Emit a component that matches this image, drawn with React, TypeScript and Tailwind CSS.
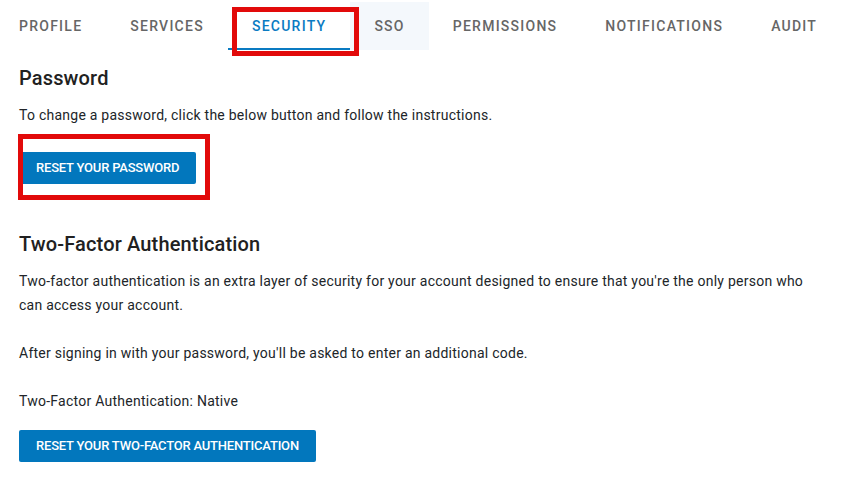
const tabs = ["PROFILE", "SERVICES", "SECURITY", "SSO", "PERMISSIONS", "NOTIFICATIONS", "AUDIT"];

export default function App() {
  return (
    <div className="relative min-h-[479px] w-[857px] overflow-hidden bg-white pl-[19px] font-['Roboto',sans-serif] text-[#212529]">
      <div className="-ml-6 mt-[2px] flex h-12">
        {tabs.map((t) => (
          <div
            key={t}
            className={
              t === "SECURITY"
                ? "flex h-12 items-center border-b-2 border-[#0a7bc2] px-6 pt-[2px] text-[14px] font-medium tracking-[1.25px] text-[#0a7bc2]"
                : t === "SSO"
                ? "flex h-12 items-center bg-[#f4f8fc] px-6 text-[14px] font-medium tracking-[1.25px] text-[#666666]"
                : "flex h-12 items-center px-6 text-[14px] font-medium tracking-[1.25px] text-[#666666]"
            }
          >
            {t}
          </div>
        ))}
      </div>

      <section className="w-[800px] tracking-[0.25px]">
        <h2 className="mt-[12px] text-[20px] font-medium leading-8 tracking-[0.15px] text-[#212121]">Password</h2>
        <p className="mt-[9px] text-[14px] leading-6">
          To change a password, click the below button and follow the instructions.
        </p>
        <button className="mt-[25px] h-8 rounded-[2px] bg-[#0277bd] px-[17px] text-[13px] font-medium tracking-[-0.2px] text-white">
          RESET YOUR PASSWORD
        </button>

        <h2 className="mt-[44px] text-[20px] font-medium leading-8 tracking-[0.15px] text-[#212121]">
          Two-Factor Authentication
        </h2>
        <p className="mt-[9px] text-[14px] leading-6">
          Two-factor authentication is an extra layer of security for your account designed to ensure that you're the
          only person who can access your account.
        </p>
        <p className="mt-6 text-[14px] leading-6">
          After signing in with your password, you'll be asked to enter an additional code.
        </p>
        <p className="mt-6 text-[14px] leading-6">Two-Factor Authentication: Native</p>
        <button className="mt-[17px] h-8 rounded-[2px] bg-[#0277bd] px-[17px] text-[13px] font-medium tracking-[-0.2px] text-white">
          RESET YOUR TWO-FACTOR AUTHENTICATION
        </button>
      </section>

      {/* annotation boxes */}
      <div className="absolute left-[232px] top-[7px] h-[49px] w-[127px] border-[5px] border-[#e20a0a]" />
      <div className="absolute left-[18px] top-[134px] h-[66px] w-[192px] border-[5px] border-[#e20a0a]" />
    </div>
  );
}
